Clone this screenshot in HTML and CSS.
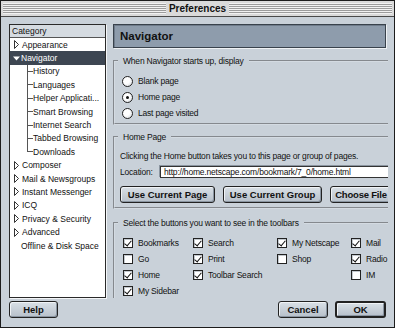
FILE: index.html
```html
<!DOCTYPE html>
<html lang="en">
<head>
    <meta charset="UTF-8">
    <meta name="viewport" content="width=device-width, initial-scale=1.0">
    <title>Preferences</title>
    <link rel="stylesheet" href="styles.css">
</head>
<body>
<div class="window">
    <div class="titlebar">
        <span class="stripes"></span>
        <span class="title">Preferences</span>
        <span class="stripes"></span>
    </div>

    <div class="content">
        <!-- category tree -->
        <div class="sidebar">
            <div class="cat-head">Category</div>
            <div class="row"><svg class="tri" width="5" height="9" viewBox="0 0 5 9"><path d="M0.5 0.5 L4.5 4.5 L0.5 8.5 Z" fill="#fff" stroke="#333"/></svg>Appearance</div>
            <div class="row selected"><svg class="tri-down" width="7" height="5" viewBox="0 0 7 5"><path d="M0 0.5 H7 L3.5 4.5 Z" fill="#fff"/></svg>Navigator</div>
            <div class="row child"><span class="conn"></span>History</div>
            <div class="row child"><span class="conn"></span>Languages</div>
            <div class="row child"><span class="conn"></span>Helper Applicati...</div>
            <div class="row child"><span class="conn"></span>Smart Browsing</div>
            <div class="row child"><span class="conn"></span>Internet Search</div>
            <div class="row child"><span class="conn"></span>Tabbed Browsing</div>
            <div class="row child last"><span class="conn"></span>Downloads</div>
            <div class="row"><svg class="tri" width="5" height="9" viewBox="0 0 5 9"><path d="M0.5 0.5 L4.5 4.5 L0.5 8.5 Z" fill="#fff" stroke="#333"/></svg>Composer</div>
            <div class="row"><svg class="tri" width="5" height="9" viewBox="0 0 5 9"><path d="M0.5 0.5 L4.5 4.5 L0.5 8.5 Z" fill="#fff" stroke="#333"/></svg>Mail &amp; Newsgroups</div>
            <div class="row"><svg class="tri" width="5" height="9" viewBox="0 0 5 9"><path d="M0.5 0.5 L4.5 4.5 L0.5 8.5 Z" fill="#fff" stroke="#333"/></svg>Instant Messenger</div>
            <div class="row"><svg class="tri" width="5" height="9" viewBox="0 0 5 9"><path d="M0.5 0.5 L4.5 4.5 L0.5 8.5 Z" fill="#fff" stroke="#333"/></svg>ICQ</div>
            <div class="row"><svg class="tri" width="5" height="9" viewBox="0 0 5 9"><path d="M0.5 0.5 L4.5 4.5 L0.5 8.5 Z" fill="#fff" stroke="#333"/></svg>Privacy &amp; Security</div>
            <div class="row"><svg class="tri" width="5" height="9" viewBox="0 0 5 9"><path d="M0.5 0.5 L4.5 4.5 L0.5 8.5 Z" fill="#fff" stroke="#333"/></svg>Advanced</div>
            <div class="row plain">Offline &amp; Disk Space</div>
        </div>

        <div class="main">
            <div class="panel-head">Navigator</div>

            <fieldset class="group g1">
                <legend>When Navigator starts up, display</legend>
                <div class="opt"><span class="radio"></span>Blank page</div>
                <div class="opt"><span class="radio on"></span>Home page</div>
                <div class="opt"><span class="radio"></span>Last page visited</div>
            </fieldset>

            <fieldset class="group g2">
                <legend>Home Page</legend>
                <div class="note">Clicking the Home button takes you to this page or group of pages.</div>
                <div class="loc">
                    <span class="loc-label">Location:</span>
                    <span class="input">http://home.netscape.com/bookmark/7_0/home.html</span>
                </div>
                <div class="btn-row">
                    <button class="btn w-page">Use Current Page</button>
                    <button class="btn w-group">Use Current Group</button>
                    <button class="btn w-file">Choose File</button>
                </div>
            </fieldset>

            <fieldset class="group g3">
                <legend>Select the buttons you want to see in the toolbars</legend>
                <div class="checks">
                    <div class="opt"><span class="cb on"></span>Bookmarks</div>
                    <div class="opt"><span class="cb on"></span>Search</div>
                    <div class="opt"><span class="cb on"></span>My Netscape</div>
                    <div class="opt"><span class="cb on"></span>Mail</div>
                    <div class="opt"><span class="cb"></span>Go</div>
                    <div class="opt"><span class="cb on"></span>Print</div>
                    <div class="opt"><span class="cb"></span>Shop</div>
                    <div class="opt"><span class="cb on"></span>Radio</div>
                    <div class="opt"><span class="cb on"></span>Home</div>
                    <div class="opt"><span class="cb on"></span>Toolbar Search</div>
                    <div class="opt"></div>
                    <div class="opt"><span class="cb"></span>IM</div>
                    <div class="opt"><span class="cb on"></span>My Sidebar</div>
                </div>
            </fieldset>
        </div>
    </div>

    <div class="footer">
        <button class="btn help">Help</button>
        <span class="spacer"></span>
        <button class="btn cancel">Cancel</button>
        <button class="btn ok">OK</button>
    </div>
</div>
</body>
</html>
```

FILE: styles.css
```css
/* Mac OS 9 platinum preferences window */
:root {
    --bg: #c9d1d9;
    --frame: #1c1c1c;
    --text: #111;
    --head-fill: #8e9cac;
    --select: #3d4652;
}

* {
    box-sizing: border-box;
}

body {
    margin: 0;
    font-family: "Liberation Sans", Arial, sans-serif;
    font-size: 8.5px;
    color: var(--text);
    background: #000;
}

.window {
    width: 395px;
    height: 328px;
    background: var(--bg);
    border: 1px solid var(--frame);
    display: flex;
    flex-direction: column;
    overflow: hidden;
}

/* title bar */
.titlebar {
    flex: none;
    height: 16px;
    display: flex;
    align-items: center;
    padding: 0 2px;
    background: #dadada;
    border-bottom: 1px solid #4a4a4a;
}

.stripes {
    flex: 1;
    height: 11px;
    background: repeating-linear-gradient(#f2f2f2 0 1px, #9c9c9c 1px 2px);
}

.title {
    padding: 0 3px;
    font-size: 10px;
    font-weight: bold;
    line-height: 12px;
}

/* body */
.content {
    flex: none;
    height: 281px;
    display: flex;
    gap: 7px;
    padding: 7px 6px 0 8px;
}

.sidebar {
    flex: none;
    width: 97px;
    height: 274px;
    background: white;
    border: 1px solid #2a2a2a;
    box-shadow: 1px 1px 0 #f4f6f8;
    overflow: hidden;
}

.cat-head {
    height: 13px;
    line-height: 12px;
    padding-left: 2px;
    background: #d5dbe1;
    border-bottom: 1px solid #555;
}

.row {
    height: 13.4px;
    display: flex;
    align-items: center;
    padding-left: 4px;
    white-space: nowrap;
}

.row .tri {
    margin-right: 3px;
}

.row.selected {
    background: var(--select);
    color: white;
    padding-left: 3px;
}

.row .tri-down {
    margin-right: 1px;
}

.row.plain {
    padding-left: 11px;
}

.row.child {
    padding-left: 17px;
}

.conn {
    width: 6px;
    align-self: stretch;
    background:
        linear-gradient(#555, #555) left top / 1px 100% no-repeat,
        linear-gradient(#555, #555) left center / 6px 1px no-repeat;
}

.row.last .conn {
    background-size: 1px 50%, 6px 1px;
}

/* right panel */
.main {
    flex: none;
    width: 275px;
    height: 274px;
    overflow: hidden;
    letter-spacing: -0.2px;
}

.panel-head {
    width: 273px;
    height: 24px;
    display: flex;
    align-items: center;
    padding-left: 6px;
    font-size: 11.5px;
    font-weight: bold;
    letter-spacing: 0;
    background: var(--head-fill);
    border: 1px solid #39424c;
    box-shadow: inset 1px 1px 0 #6f7c8b, 1px 1px 0 #eef1f4;
}

.group {
    width: 290px;
    margin: 0;
    padding: 0 0 0 5px;
    border: 2px groove #d4dbe2;
    border-right: none;
}

.group legend {
    margin-left: -2px;
    padding: 0 5px;
    line-height: 10px;
}

.g1 {
    margin-top: 8px;
    padding-top: 7px;
    padding-bottom: 2px;
}

.g2 {
    margin-top: 7px;
    padding-top: 8px;
    padding-bottom: 4px;
}

.g3 {
    margin-top: 9px;
    padding-top: 7px;
    height: 120px;
}

.opt {
    height: 16px;
    display: flex;
    align-items: center;
    white-space: nowrap;
}

.radio {
    width: 11px;
    height: 11px;
    margin: 0 5px 0 2px;
    border: 1px solid #222;
    border-radius: 50%;
    background: radial-gradient(circle at 35% 35%, #fff 40%, #cfd5db);
    display: flex;
    align-items: center;
    justify-content: center;
}

.radio.on::after {
    content: "";
    width: 3px;
    height: 3px;
    border-radius: 50%;
    background: #111;
}

.note {
    height: 12px;
    line-height: 12px;
    white-space: nowrap;
}

.loc {
    height: 12px;
    margin-top: 4px;
    display: flex;
    align-items: center;
    white-space: nowrap;
}

.loc-label {
    width: 40px;
}

.input {
    width: 240px;
    height: 12px;
    line-height: 10px;
    padding-left: 3px;
    background: white;
    border: 1px solid #333;
    box-shadow: -1px -1px 0 #8b95a0;
}

.btn-row {
    display: flex;
    gap: 8px;
    margin-top: 8px;
}

.btn {
    height: 17px;
    padding: 0;
    font-family: inherit;
    font-size: 9.5px;
    font-weight: bold;
    letter-spacing: 0;
    color: var(--text);
    background: linear-gradient(#d9e0e6, #b7c0ca);
    border: 1px solid #222;
    border-radius: 3px;
    box-shadow: inset 1px 1px 0 #f0f3f6, inset -1px -1px 0 #8a95a1;
}

.w-page {
    width: 95px;
    flex: none;
}

.w-group {
    width: 99px;
    flex: none;
}

.w-file {
    width: 62px;
    flex: none;
    letter-spacing: -0.2px;
}

.checks {
    display: grid;
    grid-template-columns: 70px 84px 74px auto;
    margin-left: 3px;
}

.cb {
    width: 10px;
    height: 10px;
    margin-right: 5px;
    flex: none;
    background: white;
    border: 1px solid #222;
    box-shadow: inset 1px 1px 0 #c3c9cf;
    display: flex;
    align-items: center;
    justify-content: center;
}

.cb.on::after {
    content: "";
    width: 3px;
    height: 6px;
    margin-top: -2px;
    border: solid #111;
    border-width: 0 1.5px 1.5px 0;
    transform: rotate(40deg);
}

/* bottom buttons */
.footer {
    flex: none;
    display: flex;
    gap: 7px;
    padding: 3px 8px 0 8px;
}

.spacer {
    flex: 1;
}

.help {
    width: 49px;
}

.cancel {
    width: 50px;
}

.ok {
    width: 51px;
    border-width: 2px;
}
```
